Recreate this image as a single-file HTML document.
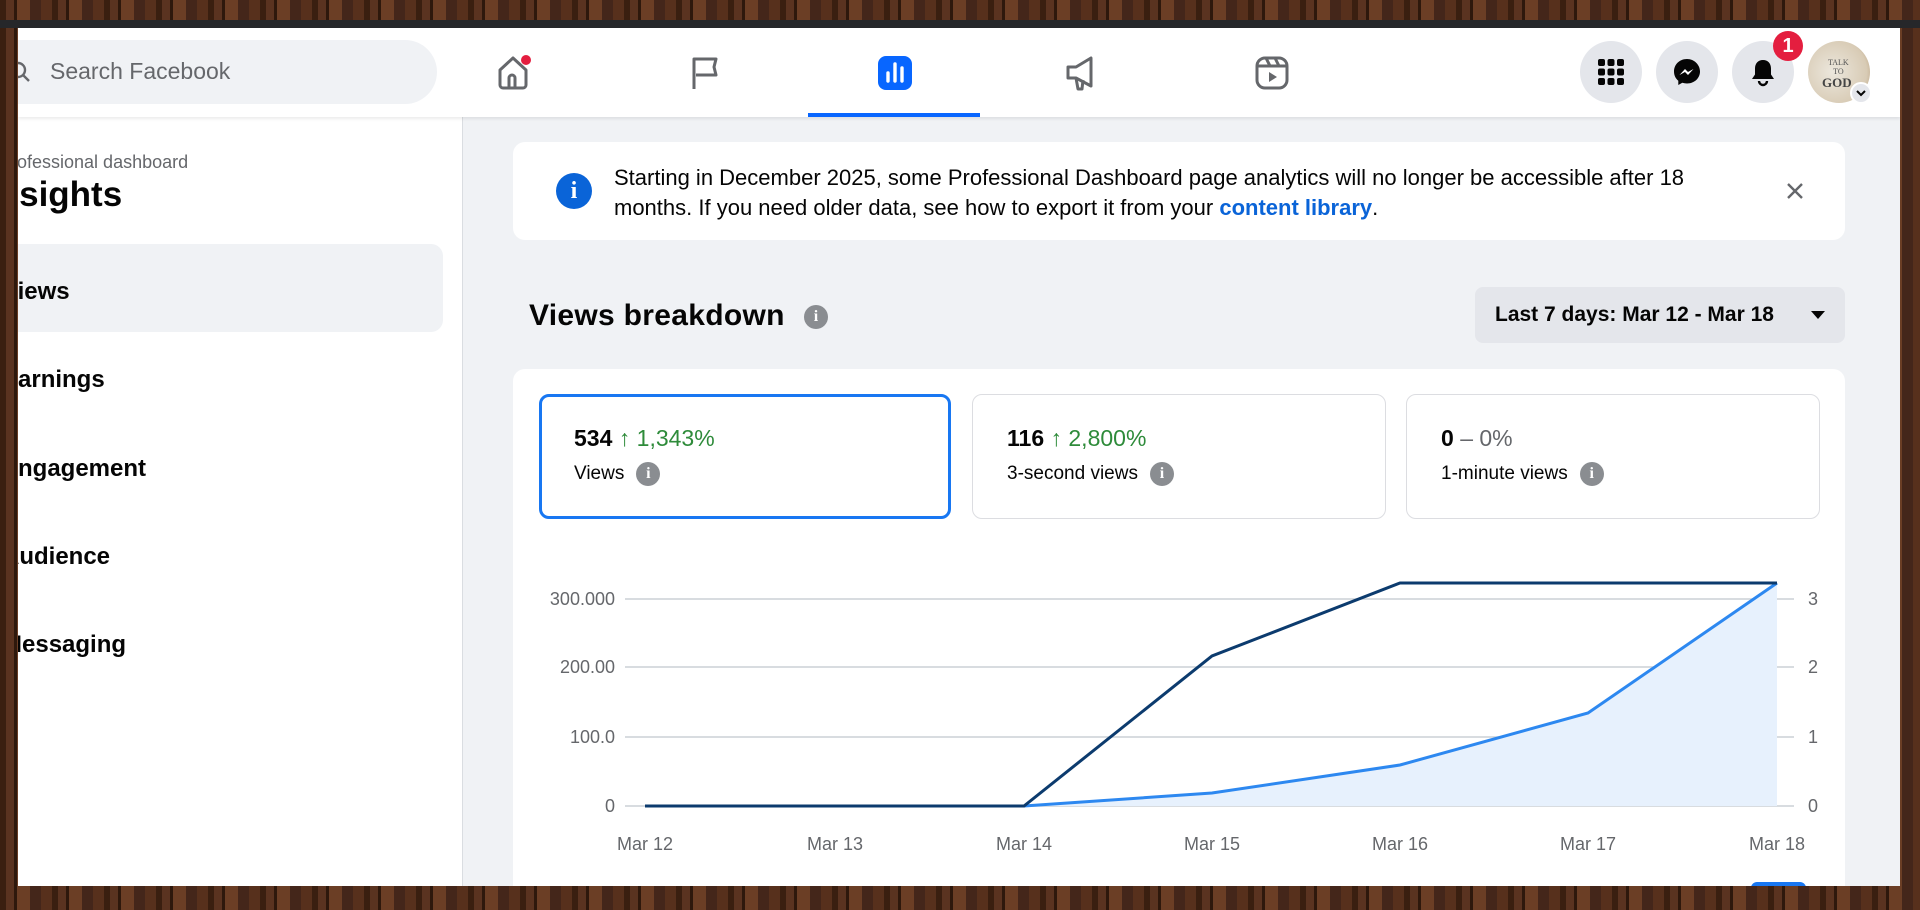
<!DOCTYPE html>
<html><head><meta charset="utf-8"><style>
*{margin:0;padding:0;box-sizing:border-box}
body{width:1920px;height:910px;overflow:hidden;font-family:"Liberation Sans",sans-serif;
background:#4a2a18;
background-image:repeating-linear-gradient(90deg,#3a1f10 0 6px,#5a3320 6px 14px,#2e180c 14px 17px,#6b3e25 17px 30px,#44261a 30px 41px,#57301c 41px 52px);}
#app{position:absolute;left:18px;top:28px;width:1882px;height:858px;overflow:hidden;background:#f0f2f5}
#topbar{position:absolute;left:0;top:20px;width:1920px;height:8px;background:#26272a}
.hdr{position:absolute;left:0;top:0;width:1882px;height:89px;background:#fff;box-shadow:0 2px 3px rgba(0,0,0,.08);z-index:2}
.abs{position:absolute}
.circ{position:absolute;width:62px;height:62px;border-radius:50%;background:#e4e6eb;top:13px}
.side{position:absolute;left:0;top:89px;width:445px;height:769px;background:#fff;border-right:1px solid #dadde1;overflow:hidden}
.item{position:absolute;left:-16px;font-size:24px;font-weight:600;color:#050505;transform:translateY(-50%)}
.box{position:absolute;top:366px;height:125px;border:1px solid #dcdde1;border-radius:10px;background:#fff}
.num{position:absolute;left:34px;top:30px;font-size:23px;font-weight:700;color:#050505}
.num span{color:#2e8b3a;font-weight:400}
.lbl{position:absolute;left:34px;top:67px;font-size:19px;color:#050505;display:flex;align-items:center;gap:12px}
.ii{width:24px;height:24px;border-radius:50%;background:#8a8d91;color:#fff;font-size:16px;font-weight:700;display:inline-flex;align-items:center;justify-content:center;font-family:"Liberation Serif",serif}
</style></head><body>
<div id="topbar"></div>
<div id="app">
 <div class="hdr">
  <div class="abs" style="left:-40px;top:12px;width:459px;height:64px;border-radius:32px;background:#f0f2f5"></div>
  <svg class="abs" style="left:-10px;top:32px" width="24" height="24" viewBox="0 0 24 24"><circle cx="10" cy="10" r="7" fill="none" stroke="#65676b" stroke-width="2.4"/><path d="M15 15l6 6" stroke="#65676b" stroke-width="2.4"/></svg>
  <div class="abs" style="left:32px;top:30px;font-size:23px;color:#65676b">Search Facebook</div>
  <svg class="abs" style="left:477px;top:25px" width="40" height="40" viewBox="0 0 40 40"><path d="M5 17L18 5l13 12v15a3 3 0 0 1-3 3H8a3 3 0 0 1-3-3z M14 35V25a3 3 0 0 1 6 0v10" fill="none" stroke="#65676b" stroke-width="3" stroke-linejoin="round"/><circle cx="31" cy="7" r="5" fill="#e41e3f"/></svg>
  <svg class="abs" style="left:667px;top:25px" width="40" height="40" viewBox="0 0 40 40"><path d="M9 36V6h22l-2 8 2 8H11" fill="none" stroke="#65676b" stroke-width="3" stroke-linejoin="round"/></svg>
  <svg class="abs" style="left:857px;top:25px" width="40" height="40" viewBox="0 0 40 40"><rect x="3" y="3" width="34" height="34" rx="8" fill="#0866ff"/><path d="M13 28v-8M20 28V11M27 28V15" stroke="#fff" stroke-width="3.4" stroke-linecap="round"/></svg>
  <div class="abs" style="left:790px;top:85px;width:172px;height:4px;background:#0866ff"></div>
  <svg class="abs" style="left:1044px;top:25px" width="40" height="40" viewBox="0 0 40 40"><path d="M6 14h8l15-9v28l-15-8H6z M14 25l2 11h4l1-9" fill="none" stroke="#65676b" stroke-width="3" stroke-linejoin="round"/></svg>
  <svg class="abs" style="left:1234px;top:25px" width="40" height="40" viewBox="0 0 40 40"><rect x="5" y="5" width="30" height="30" rx="8" fill="none" stroke="#65676b" stroke-width="3"/><path d="M5 13h30M14 5l4 8M23 5l4 8" stroke="#65676b" stroke-width="3"/><path d="M17 19v10l8-5z" fill="#65676b"/></svg>
  <div class="circ" style="left:1562px"></div>
  <svg class="abs" style="left:1578px;top:29px" width="30" height="30" viewBox="0 0 30 30"><g fill="#050505"><rect x="2" y="2" width="7" height="7" rx="2"/><rect x="11.5" y="2" width="7" height="7" rx="2"/><rect x="21" y="2" width="7" height="7" rx="2"/><rect x="2" y="11.5" width="7" height="7" rx="2"/><rect x="11.5" y="11.5" width="7" height="7" rx="2"/><rect x="21" y="11.5" width="7" height="7" rx="2"/><rect x="2" y="21" width="7" height="7" rx="2"/><rect x="11.5" y="21" width="7" height="7" rx="2"/><rect x="21" y="21" width="7" height="7" rx="2"/></g></svg>
  <div class="circ" style="left:1638px"></div>
  <svg class="abs" style="left:1654px;top:29px" width="30" height="30" viewBox="0 0 30 30"><path d="M15 2C7.5 2 2 7.5 2 14.5c0 3.8 1.6 7 4.3 9.2V28l4-2.2c1.5.4 3 .7 4.7.7 7.5 0 13-5.5 13-12S22.5 2 15 2z" fill="#050505"/><path d="M7.5 18l5.5-6 3 3 5.5-3-5.5 6-3-3z" fill="#fff"/></svg>
  <div class="circ" style="left:1714px"></div>
  <svg class="abs" style="left:1730px;top:29px" width="30" height="30" viewBox="0 0 30 30"><path d="M15 3c-5 0-8 3.5-8 8.5v6L4 22h22l-3-4.5v-6C23 6.5 20 3 15 3z" fill="#050505"/><path d="M11 24a4 4 0 0 0 8 0" fill="none" stroke="#050505" stroke-width="2.4"/></svg>
  <div class="abs" style="left:1755px;top:3px;width:30px;height:30px;border-radius:50%;background:#e41e3f;color:#fff;font-weight:700;font-size:20px;text-align:center;line-height:30px">1</div>
  <div class="abs" style="left:1790px;top:13px;width:62px;height:62px;border-radius:50%;background:radial-gradient(circle at 40% 50%,#ece7dd,#d8cbb5 70%,#a88b63);"></div>
  <div class="abs" style="left:1810px;top:30px;font-family:'Liberation Serif',serif;font-size:8px;color:#555;text-align:center;line-height:9px">TALK<br>TO</div>
  <div class="abs" style="left:1804px;top:47px;font-family:'Liberation Serif',serif;font-size:13px;font-weight:700;color:#444">GOD</div>
  <div class="abs" style="left:1832px;top:54px;width:22px;height:22px;border-radius:50%;background:#e4e6eb;border:2px solid #fff"></div>
  <svg class="abs" style="left:1837px;top:60px" width="12" height="10" viewBox="0 0 12 10"><path d="M2 3l4 4 4-4" fill="none" stroke="#050505" stroke-width="2"/></svg>
 </div>
 <div class="side">
  <div class="abs" style="left:-19px;top:35px;font-size:18px;color:#65676b;font-weight:500">Professional dashboard</div>
  <div class="abs" style="left:-30px;top:58px;font-size:35px;font-weight:700;color:#050505">Insights</div>
  <div class="abs" style="left:-20px;top:127px;width:445px;height:88px;border-radius:12px;background:#f0f2f5"></div>
  <div class="item" style="top:175px">Views</div>
  <div class="item" style="top:263px">Earnings</div>
  <div class="item" style="top:352px">Engagement</div>
  <div class="item" style="top:440px">Audience</div>
  <div class="item" style="top:528px">Messaging</div>
 </div>
 <div class="abs" style="left:495px;top:114px;width:1332px;height:98px;border-radius:12px;background:#fff"></div>
 <div class="abs" style="left:538px;top:145px;width:36px;height:36px;border-radius:50%;background:#0a64d8;color:#fff;font-family:'Liberation Serif',serif;font-weight:700;font-size:24px;text-align:center;line-height:36px">i</div>
 <div class="abs" style="left:596px;top:135px;font-size:22px;line-height:30px;color:#050505;width:1150px">Starting in December 2025, some Professional Dashboard page analytics will no longer be accessible after 18 months. If you need older data, see how to export it from your <span style="color:#0a64d8;font-weight:600">content library</span>.</div>
 <svg class="abs" style="left:1767px;top:153px" width="20" height="20" viewBox="0 0 20 20"><path d="M3 3l14 14M17 3L3 17" stroke="#65676b" stroke-width="2.4"/></svg>
 <div class="abs" style="left:511px;top:271px;font-size:30px;font-weight:700;color:#050505;letter-spacing:0.3px">Views breakdown</div>
 <div class="ii abs" style="left:786px;top:277px">i</div>
 <div class="abs" style="left:1457px;top:259px;width:370px;height:56px;border-radius:8px;background:#e4e6eb;font-size:21px;font-weight:600;color:#050505;line-height:56px;padding-left:20px">Last 7 days: Mar 12 - Mar 18<span style="position:absolute;right:20px;top:24px;border:7px solid transparent;border-top:8px solid #050505;border-bottom:0"></span></div>
 <div class="abs" style="left:495px;top:341px;width:1332px;height:560px;border-radius:12px;background:#fff"></div>
 <div class="box" style="left:521px;width:412px;border:3px solid #1877f2"><div class="num" style="left:32px;top:28px">534 <span>↑ 1,343%</span></div><div class="lbl" style="left:32px;top:65px">Views <span class="ii">i</span></div></div>
 <div class="box" style="left:954px;width:414px"><div class="num">116 <span>↑ 2,800%</span></div><div class="lbl">3-second views <span class="ii">i</span></div></div>
 <div class="box" style="left:1388px;width:414px"><div class="num">0 <span style="color:#65676b">– 0%</span></div><div class="lbl">1-minute views <span class="ii">i</span></div></div>
 <svg class="abs" style="left:0;top:0" width="1882" height="858" viewBox="0 0 1882 858">
  <g stroke="#ccd0d5" stroke-width="1.5"><path d="M607 571H1776M607 639H1776M607 709H1776M607 778H1776"/></g>
  <path d="M1006 778L1194 765L1382 737L1570 685L1759 555V778Z" fill="#e7f1fd"/>
  <path d="M627 778H1006L1194 765L1382 737L1570 685L1759 555" fill="none" stroke="#2d88f0" stroke-width="3"/>
  <path d="M627 778H1006L1194 628L1382 555H1759" fill="none" stroke="#0c3b6e" stroke-width="3"/>
  <g font-family="Liberation Sans" font-size="18" fill="#65676b">
   <text x="597" y="577" text-anchor="end">300.000</text><text x="597" y="645" text-anchor="end">200.00</text><text x="597" y="715" text-anchor="end">100.0</text><text x="597" y="784" text-anchor="end">0</text>
   <text x="1790" y="577">3</text><text x="1790" y="645">2</text><text x="1790" y="715">1</text><text x="1790" y="784">0</text>
   <g text-anchor="middle"><text x="627" y="822">Mar 12</text><text x="817" y="822">Mar 13</text><text x="1006" y="822">Mar 14</text><text x="1194" y="822">Mar 15</text><text x="1382" y="822">Mar 16</text><text x="1570" y="822">Mar 17</text><text x="1759" y="822">Mar 18</text></g>
  </g>
  <rect x="1733" y="854" width="55" height="12" rx="6" fill="#1877f2"/>
 </svg>
</div>
</body></html>
